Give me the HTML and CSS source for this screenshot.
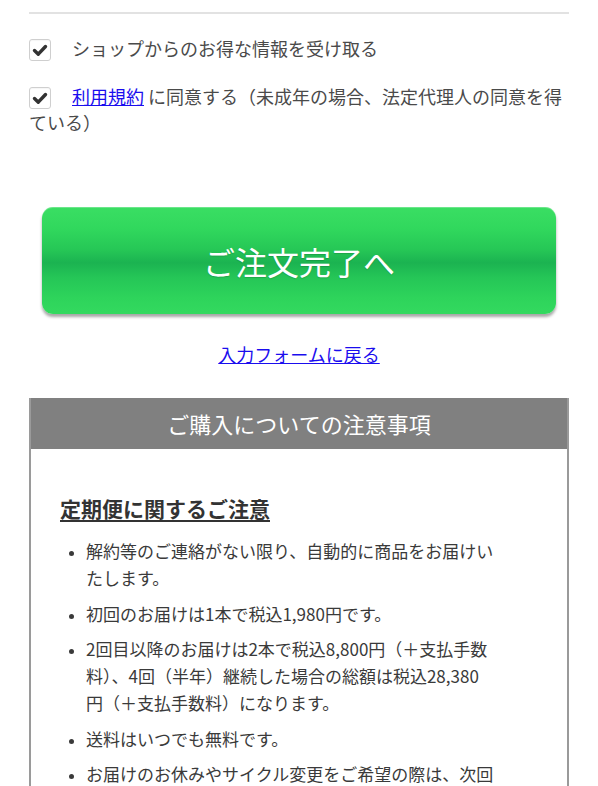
FILE: index.html
```html
<!DOCTYPE html>
<html lang="ja">
<head>
<meta charset="utf-8">
<link rel="stylesheet" href="styles.css">
</head>
<body>
<div class="page">
  <div class="rule"></div>

  <div class="agree">
    <p class="check-row"><span class="box"><svg viewBox="0 0 22 22" width="22" height="22"><path d="M5.5 11.5 L9.3 15.2 L16.5 7.5" fill="none" stroke="#333" stroke-width="3.4" stroke-linecap="round" stroke-linejoin="round"/></svg></span>ショップからのお得な情報を受け取る</p>
    <p class="check-row"><span class="box"><svg viewBox="0 0 22 22" width="22" height="22"><path d="M5.5 11.5 L9.3 15.2 L16.5 7.5" fill="none" stroke="#333" stroke-width="3.4" stroke-linecap="round" stroke-linejoin="round"/></svg></span><a href="#" class="terms">利用規約</a> に同意する（未成年の場合、法定代理人の同意を得ている）</p>
  </div>

  <div class="btn-wrap">
    <button class="submit" type="button">ご注文完了へ</button>
  </div>

  <p class="back"><a href="#">入力フォームに戻る</a></p>

  <section class="notice">
    <h2 class="notice-title">ご購入についての注意事項</h2>
    <div class="notice-body">
      <h3 class="notice-head">定期便に関するご注意</h3>
      <ul class="notice-list">
        <li>解約等のご連絡がない限り、自動的に商品をお届けいたします。</li>
        <li>初回のお届けは1本で税込1,980円です。</li>
        <li>2回目以降のお届けは2本で税込8,800円（＋支払手数料）、4回（半年）継続した場合の総額は税込28,380円（＋支払手数料）になります。</li>
        <li>送料はいつでも無料です。</li>
        <li>お届けのお休みやサイクル変更をご希望の際は、次回お届け予定日の10日前までにご連絡ください。</li>
      </ul>
    </div>
  </section>
</div>
</body>
</html>
```
FILE: styles.css
```css
html, body {
  margin: 0;
  padding: 0;
  background: #fff;
}
body {
  font-family: "Noto Sans CJK JP", "Noto Sans", "Liberation Sans", sans-serif;
  color: #444;
}
.page {
  padding: 12px 29px 40px;
}
.rule {
  height: 2px;
  background: #e2e2e2;
}
.agree {
  padding-top: 21px;
}
.check-row {
  margin: 0 0 22px;
  font-size: 18px;
  line-height: 26px;
  color: #4a4a4a;
}
.box {
  display: inline-block;
  width: 20px;
  height: 20px;
  border: 1px solid #cfcfcf;
  border-radius: 3px;
  background: #fff;
  vertical-align: -5px;
  margin-right: 21px;
  box-shadow: inset 0 1px 1px rgba(0,0,0,0.04);
}
.box svg {
  display: block;
  margin: -1px;
}
.terms {
  color: #1a0dee;
  text-decoration: underline;
}
.btn-wrap {
  padding: 50px 13px 0;
}
.submit {
  display: block;
  width: 100%;
  height: 107px;
  border: 0;
  border-radius: 11px;
  font-family: "Noto Sans CJK JP", "Noto Sans", sans-serif;
  font-size: 32px;
  color: #fff;
  background: linear-gradient(to bottom, #3ade63 0%, #31d85d 20%, #26c756 40%, #1bb351 52%, #25c657 66%, #2ed45b 85%, #33d95f 100%);
  box-shadow: 0 3px 3px rgba(0,0,0,0.35), inset 0 1px 0 rgba(255,255,255,0.25);
  text-shadow: 0 1px 1px rgba(0,0,0,0.15);
  padding: 0;
  cursor: pointer;
}
.back {
  margin: 27px 0 0;
  text-align: center;
  font-size: 18px;
  line-height: 26px;
}
.back a {
  color: #1a0dee;
  text-decoration: underline;
}
.notice {
  margin-top: 31px;
  border: 2px solid #9a9a9a;
  border-top: 0;
}
.notice-title {
  margin: 0;
  background: #808080;
  color: #fff;
  font-weight: normal;
  font-size: 22px;
  line-height: 51px;
  text-align: center;
}
.notice-body {
  padding: 44px 29px 20px;
}
.notice-head {
  margin: 0;
  font-size: 21px;
  line-height: 30px;
  font-weight: bold;
  color: #333;
  text-decoration: underline;
  text-underline-offset: 3px;
}
.notice-list {
  margin: 14px 43px 0 0;
  padding: 0 0 0 26px;
  list-style: disc;
  font-size: 17px;
  line-height: 27px;
  color: #3a3a3a;
}
.notice-list li {
  margin-bottom: 8.5px;
}
.notice-list li::marker {
  font-size: 14px;
}
```
